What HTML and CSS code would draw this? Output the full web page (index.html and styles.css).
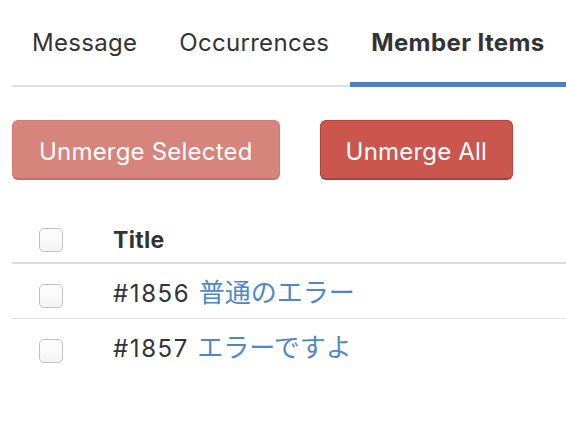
FILE: index.html
```html
<!DOCTYPE html>
<html lang="ja">
<head>
<meta charset="utf-8">
<link rel="stylesheet" href="styles.css">
</head>
<body>
<div class="page">
  <nav class="tabs">
    <a class="tab">Message</a>
    <a class="tab">Occurrences</a>
    <a class="tab active">Member Items</a>
  </nav>
  <div class="actions">
    <button class="btn btn-light">Unmerge Selected</button>
    <button class="btn btn-dark">Unmerge All</button>
  </div>
  <table class="items">
    <thead>
      <tr>
        <th class="check-col"><span class="check"></span></th>
        <th class="title-col">Title</th>
      </tr>
    </thead>
    <tbody>
      <tr>
        <td class="check-col"><span class="check"></span></td>
        <td class="title-col">#1856 <a class="link">普通のエラー</a></td>
      </tr>
      <tr>
        <td class="check-col"><span class="check"></span></td>
        <td class="title-col">#1857 <a class="link">エラーですよ</a></td>
      </tr>
    </tbody>
  </table>
</div>
</body>
</html>
```

FILE: styles.css
```css
* { box-sizing: border-box; }
html, body { margin: 0; padding: 0; background: #fff; }
body {
  font-family: Inter, "Noto Sans CJK JP", sans-serif;
  color: #333;
}
.page {
  padding: 0 0 0 12px;
  width: 566px;
  overflow: hidden;
}
.tabs {
  display: flex;
  border-bottom: 2px solid #dde1e5;
  height: 87px;
}
.tab {
  display: block;
  padding: 27px 21px 23px;
  font-size: 24px;
  line-height: 32px;
  letter-spacing: 0.3px;
  color: #333;
  height: 87px;
  border-bottom: 5px solid transparent;
  white-space: nowrap;
}
.tab:first-child { margin-left: -1px; }
.tab.active {
  font-weight: 700;
  border-bottom-color: #4f7fc1;
  letter-spacing: 0.4px;
}
.actions {
  display: flex;
  gap: 40px;
  padding-top: 33px;
}
.btn {
  height: 60px;
  padding: 4px 26px 0;
  border-radius: 6px;
  border: 1px solid transparent;
  font-family: Inter, sans-serif;
  font-size: 24px;
  letter-spacing: 0.2px;
  color: #fff;
}
.btn-dark { padding: 4px 25px 0; }
.btn-light {
  background: #d7847c;
  border-color: #d37a72;
  border-bottom: 2px solid #c57069;
}
.btn-dark {
  background: #cb564d;
  border-color: #b9443c;
  border-bottom: 2px solid #a6423b;
}
.items {
  width: 554px;
  border-collapse: collapse;
  margin-top: 36px;
  font-size: 24px;
  letter-spacing: 1.6px;
}
.items th, .items td {
  padding: 0;
  text-align: left;
  vertical-align: top;
  line-height: 30px;
}
.items thead tr { height: 47px; border-bottom: 2px solid #ddd; }
.items tbody tr { height: 55px; }
.items tbody tr:first-child { border-bottom: 1px solid #ddd; }
.items th.title-col { font-weight: 700; font-size: 23px; letter-spacing: 0.3px; padding-top: 9px; }
.items th.check-col { padding-top: 12px; }
.items td.check-col { padding-top: 20px; }
.items td.title-col { padding-top: 14px; }
.check-col { width: 101px; padding-left: 27px !important; }
.check {
  display: block;
  width: 24px;
  height: 24px;
  border: 1px solid #c2c2c2;
  border-radius: 5px;
  background: linear-gradient(#fff, #f4f4f4);
}
.title-col { color: #333; }
.link { color: #4f87c9; letter-spacing: 0; font-size: 26px; line-height: 30px; }
```
